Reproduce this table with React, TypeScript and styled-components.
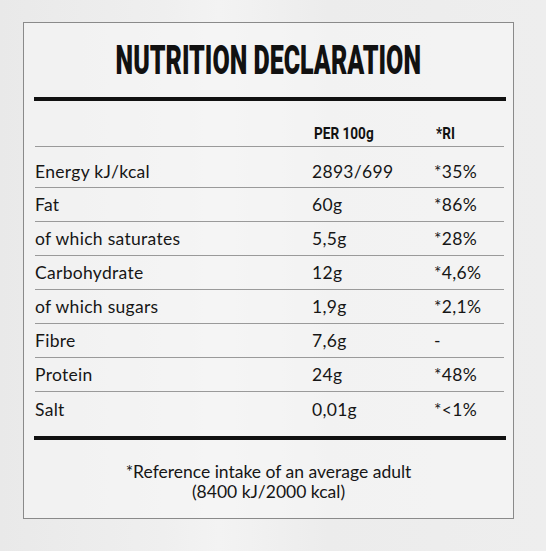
import React from "react";
import styled, { createGlobalStyle } from "styled-components";

const Global = createGlobalStyle`
  html, body { margin: 0; padding: 0; }
  body {
    background: linear-gradient(90deg, #e9e9e9 0%, #efefef 30%, #f3f3f3 40%, #ececec 60%, #eeeeee 100%);
    width: 546px;
    height: 551px;
    overflow: hidden;
    font-family: "Lato", "Liberation Sans", sans-serif;
    color: #161616;
  }
`;

const Card = styled.section`
  box-sizing: border-box;
  width: 491px;
  height: 497px;
  margin: 22px 0 0 23px;
  border: 1.5px solid #8a8a8a;
  background: rgba(246, 246, 246, 0.6);
  display: flex;
  flex-direction: column;
`;

const TitleWrap = styled.div`
  height: 74px;
  display: flex;
  align-items: center;
  justify-content: center;
`;

const Title = styled.h1`
  margin: 0;
  font-family: "Roboto", "Liberation Sans", sans-serif;
  font-weight: 900;
  font-size: 41px;
  line-height: 1;
  transform: scaleX(0.61);
  white-space: nowrap;
  color: #111;
`;

const ThickRule = styled.hr`
  margin: 0 7px 0 10px;
  border: 0;
  height: 4px;
  background: #111;
`;

const Rows = styled.div`
  margin: 0 9px 10px 11px;
  display: flex;
  flex-direction: column;
`;

const Row = styled.div<{ $h: number; $pt?: number; $last?: boolean }>`
  display: grid;
  grid-template-columns: 277px 122px 1fr;
  align-items: center;
  box-sizing: border-box;
  height: ${(p) => p.$h}px;
  padding-top: ${(p) => p.$pt ?? 0}px;
  border-bottom: ${(p) => (p.$last ? "none" : "1px solid #9a9a9a")};
`;

const HeadCell = styled.span`
  font-family: "Roboto", "Liberation Sans", sans-serif;
  font-weight: 700;
  font-size: 17px;
  display: inline-block;
  justify-self: start;
  margin-left: 2px;
  transform-origin: left center;
  transform: scaleX(0.8);
  white-space: nowrap;
  color: #111;
`;

const Cell = styled.span`
  font-size: 17.5px;
  letter-spacing: 0.3px;
  white-space: nowrap;
`;

const Footnote = styled.p`
  margin: 22px 0 0;
  text-align: center;
  font-size: 17.5px;
  line-height: 20px;
`;

const data: [string, string, string][] = [
  ["Energy kJ/kcal", "2893/699", "*35%"],
  ["Fat", "60g", "*86%"],
  ["of which saturates", "5,5g", "*28%"],
  ["Carbohydrate", "12g", "*4,6%"],
  ["of which sugars", "1,9g", "*2,1%"],
  ["Fibre", "7,6g", "-"],
  ["Protein", "24g", "*48%"],
  ["Salt", "0,01g", "*<1%"],
];

export default function App() {
  return (
    <>
      <Global />
      <Card>
        <TitleWrap>
          <Title>NUTRITION DECLARATION</Title>
        </TitleWrap>
        <ThickRule />
        <Rows>
          <Row $h={46} $pt={18}>
            <span />
            <HeadCell>PER 100g</HeadCell>
            <HeadCell>*RI</HeadCell>
          </Row>
          {data.map(([l, v, r], i) => (
            <Row
              key={l}
              $h={i === 0 ? 41 : 34}
              $pt={i === 0 ? 8 : 0}
              $last={i === data.length - 1}
            >
              <Cell>{l}</Cell>
              <Cell>{v}</Cell>
              <Cell>{r}</Cell>
            </Row>
          ))}
        </Rows>
        <ThickRule />
        <Footnote>
          *Reference intake of an average adult
          <br />
          (8400 kJ/2000 kcal)
        </Footnote>
      </Card>
    </>
  );
}
